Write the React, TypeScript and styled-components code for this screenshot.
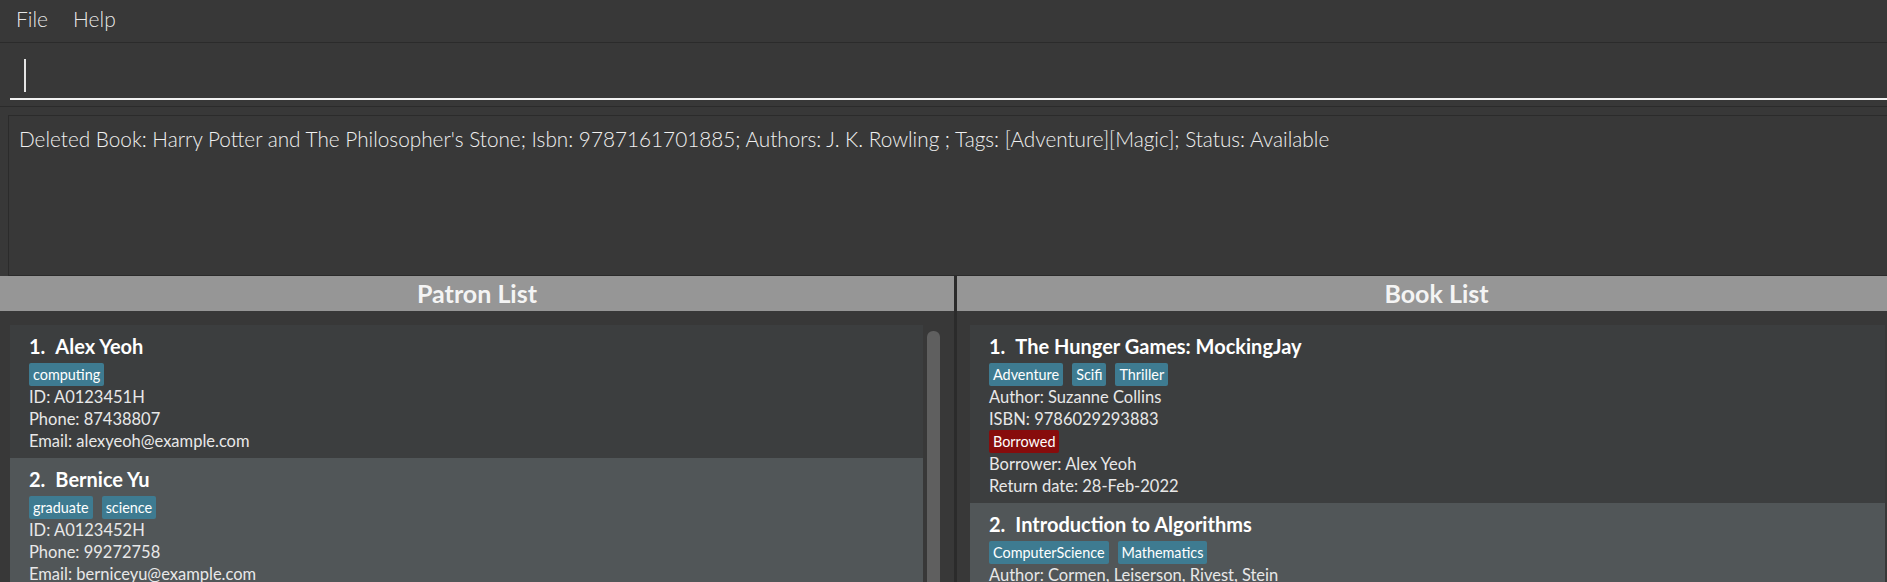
import React from "react";
import styled, { createGlobalStyle } from "styled-components";

const FONT = `"Lato", "Roboto", "Liberation Sans", sans-serif`;

const GlobalStyle = createGlobalStyle`
  html, body {
    margin: 0;
    padding: 0;
    background: #383838;
    overflow: hidden;
  }
  body {
    font-family: ${FONT};
  }
  * { box-sizing: border-box; }
`;

const Window = styled.div`
  width: 1916px;
  height: 582px;
  display: flex;
  flex-direction: column;
  background: #383838;
  overflow: hidden;
`;

const MenuBar = styled.nav`
  height: 43px;
  flex: none;
  display: flex;
  align-items: flex-start;
  gap: 25px;
  padding: 6px 0 0 16px;
  border-bottom: 1px solid #2b2b2b;
`;

const MenuItem = styled.span`
  font-size: 21px;
  font-weight: 300;
  line-height: 26px;
  color: rgba(255, 255, 255, 0.9);
`;

const CommandBar = styled.div`
  height: 64px;
  flex: none;
  padding: 13px 0 0 10px;
  border-bottom: 1px solid #2b2b2b;
`;

const CommandField = styled.div`
  height: 44px;
  padding: 3px 0 0 14px;
  border-bottom: 2px solid #f2f2f2;
`;

const Caret = styled.span`
  display: block;
  width: 2px;
  height: 33px;
  background: #e4e4e4;
`;

const ResultArea = styled.div`
  height: 169px;
  flex: none;
  padding: 8px 0 0 8px;
`;

const ResultBox = styled.div`
  height: 161px;
  border: 1px solid #2b2b2b;
  border-right: none;
  padding: 9px 0 0 10px;
  font-size: 20.75px;
  font-weight: 300;
  line-height: 28px;
  color: #f0f0f0;
  white-space: nowrap;
`;

const Panels = styled.div`
  flex: 1;
  min-height: 0;
  display: grid;
  grid-template-columns: 954px 1fr;
  column-gap: 3px;
  background: #2b2b2b;
`;

const Panel = styled.section`
  display: flex;
  flex-direction: column;
  background: #383838;
  min-height: 0;
`;

const PanelHeader = styled.h2`
  margin: 0;
  height: 35px;
  flex: none;
  background: #969696;
  color: #f4f4f4;
  font-size: 25px;
  font-weight: 700;
  line-height: 35px;
  text-align: center;
`;

const ListArea = styled.div<{ $inset: number }>`
  flex: 1;
  min-height: 0;
  display: flex;
  padding: 14px 0 0 ${(p) => p.$inset}px;
  overflow: hidden;
`;

const Cards = styled.div`
  flex: 1;
  display: flex;
  flex-direction: column;
`;

const ScrollTrack = styled.div`
  width: 13px;
  flex: none;
  margin: 0 14px 0 4px;
  padding-top: 6px;
`;

const ScrollThumb = styled.div`
  height: 400px;
  border-radius: 6px;
  background: #5f5f5f;
`;

const Card = styled.article<{ $odd: boolean }>`
  flex: none;
  background: ${(p) => (p.$odd ? "#515658" : "#3c3e3f")};
  padding: 9px 0 6px 19px;
`;

const CardTitle = styled.div`
  display: flex;
  font-size: 20px;
  font-weight: 700;
  line-height: 25px;
  color: #ffffff;
  white-space: nowrap;
`;

const CardIndex = styled.span`
  margin-right: 10px;
`;

const TagRow = styled.div<{ $gap?: number }>`
  display: flex;
  gap: 9px;
  height: 23px;
  margin-top: ${(p) => p.$gap ?? 4}px;
`;

const Tag = styled.span<{ $status?: boolean }>`
  display: inline-block;
  height: 23px;
  padding: 0 4px;
  border-radius: 2px;
  background: ${(p) => (p.$status ? "#870c0c" : "#3e7b91")};
  color: #ffffff;
  font-size: 14.4px;
  line-height: 23px;
`;

const Detail = styled.div`
  font-size: 16.5px;
  line-height: 22px;
  color: #e8e8e8;
  white-space: nowrap;
`;

type Patron = { name: string; tags: string[]; id: string; phone: string; email: string };
type Book = {
  title: string;
  tags: string[];
  author: string;
  isbn: string;
  borrowed?: { by: string; due: string };
};

const patrons: Patron[] = [
  { name: "Alex Yeoh", tags: ["computing"], id: "A0123451H", phone: "87438807", email: "alexyeoh@example.com" },
  { name: "Bernice Yu", tags: ["graduate", "science"], id: "A0123452H", phone: "99272758", email: "berniceyu@example.com" },
  { name: "Charlotte Oliveiro", tags: ["history"], id: "A0123453H", phone: "93210283", email: "charlotte@example.com" },
];

const books: Book[] = [
  {
    title: "The Hunger Games: MockingJay",
    tags: ["Adventure", "Scifi", "Thriller"],
    author: "Suzanne Collins",
    isbn: "9786029293883",
    borrowed: { by: "Alex Yeoh", due: "28-Feb-2022" },
  },
  {
    title: "Introduction to Algorithms",
    tags: ["ComputerScience", "Mathematics"],
    author: "Cormen, Leiserson, Rivest, Stein",
    isbn: "9780262033848",
  },
];

export default function App() {
  return (
    <>
      <GlobalStyle />
      <Window>
        <MenuBar>
          <MenuItem>File</MenuItem>
          <MenuItem>Help</MenuItem>
        </MenuBar>
        <CommandBar>
          <CommandField>
            <Caret />
          </CommandField>
        </CommandBar>
        <ResultArea>
          <ResultBox>
            Deleted Book: Harry Potter and The Philosopher's Stone; Isbn: 9787161701885; Authors: J. K. Rowling ; Tags:
            [Adventure][Magic]; Status: Available
          </ResultBox>
        </ResultArea>
        <Panels>
          <Panel>
            <PanelHeader>Patron List</PanelHeader>
            <ListArea $inset={10}>
              <Cards>
                {patrons.map((p, i) => (
                  <Card key={p.id} $odd={i % 2 === 1}>
                    <CardTitle>
                      <CardIndex>{i + 1}.</CardIndex>
                      {p.name}
                    </CardTitle>
                    <TagRow>
                      {p.tags.map((t) => (
                        <Tag key={t}>{t}</Tag>
                      ))}
                    </TagRow>
                    <Detail>ID: {p.id}</Detail>
                    <Detail>Phone: {p.phone}</Detail>
                    <Detail>Email: {p.email}</Detail>
                  </Card>
                ))}
              </Cards>
              <ScrollTrack>
                <ScrollThumb />
              </ScrollTrack>
            </ListArea>
          </Panel>
          <Panel>
            <PanelHeader>Book List</PanelHeader>
            <ListArea $inset={13}>
              <Cards>
                {books.map((b, i) => (
                  <Card key={b.isbn} $odd={i % 2 === 1}>
                    <CardTitle>
                      <CardIndex>{i + 1}.</CardIndex>
                      {b.title}
                    </CardTitle>
                    <TagRow>
                      {b.tags.map((t) => (
                        <Tag key={t}>{t}</Tag>
                      ))}
                    </TagRow>
                    <Detail>Author: {b.author}</Detail>
                    <Detail>ISBN: {b.isbn}</Detail>
                    {b.borrowed ? (
                      <>
                        <TagRow $gap={0}>
                          <Tag $status>Borrowed</Tag>
                        </TagRow>
                        <Detail>Borrower: {b.borrowed.by}</Detail>
                        <Detail>Return date: {b.borrowed.due}</Detail>
                      </>
                    ) : (
                      <TagRow $gap={0}>
                        <Tag $status={false}>Available</Tag>
                      </TagRow>
                    )}
                  </Card>
                ))}
              </Cards>
              <ScrollTrack>
                <ScrollThumb />
              </ScrollTrack>
            </ListArea>
          </Panel>
        </Panels>
      </Window>
    </>
  );
}
